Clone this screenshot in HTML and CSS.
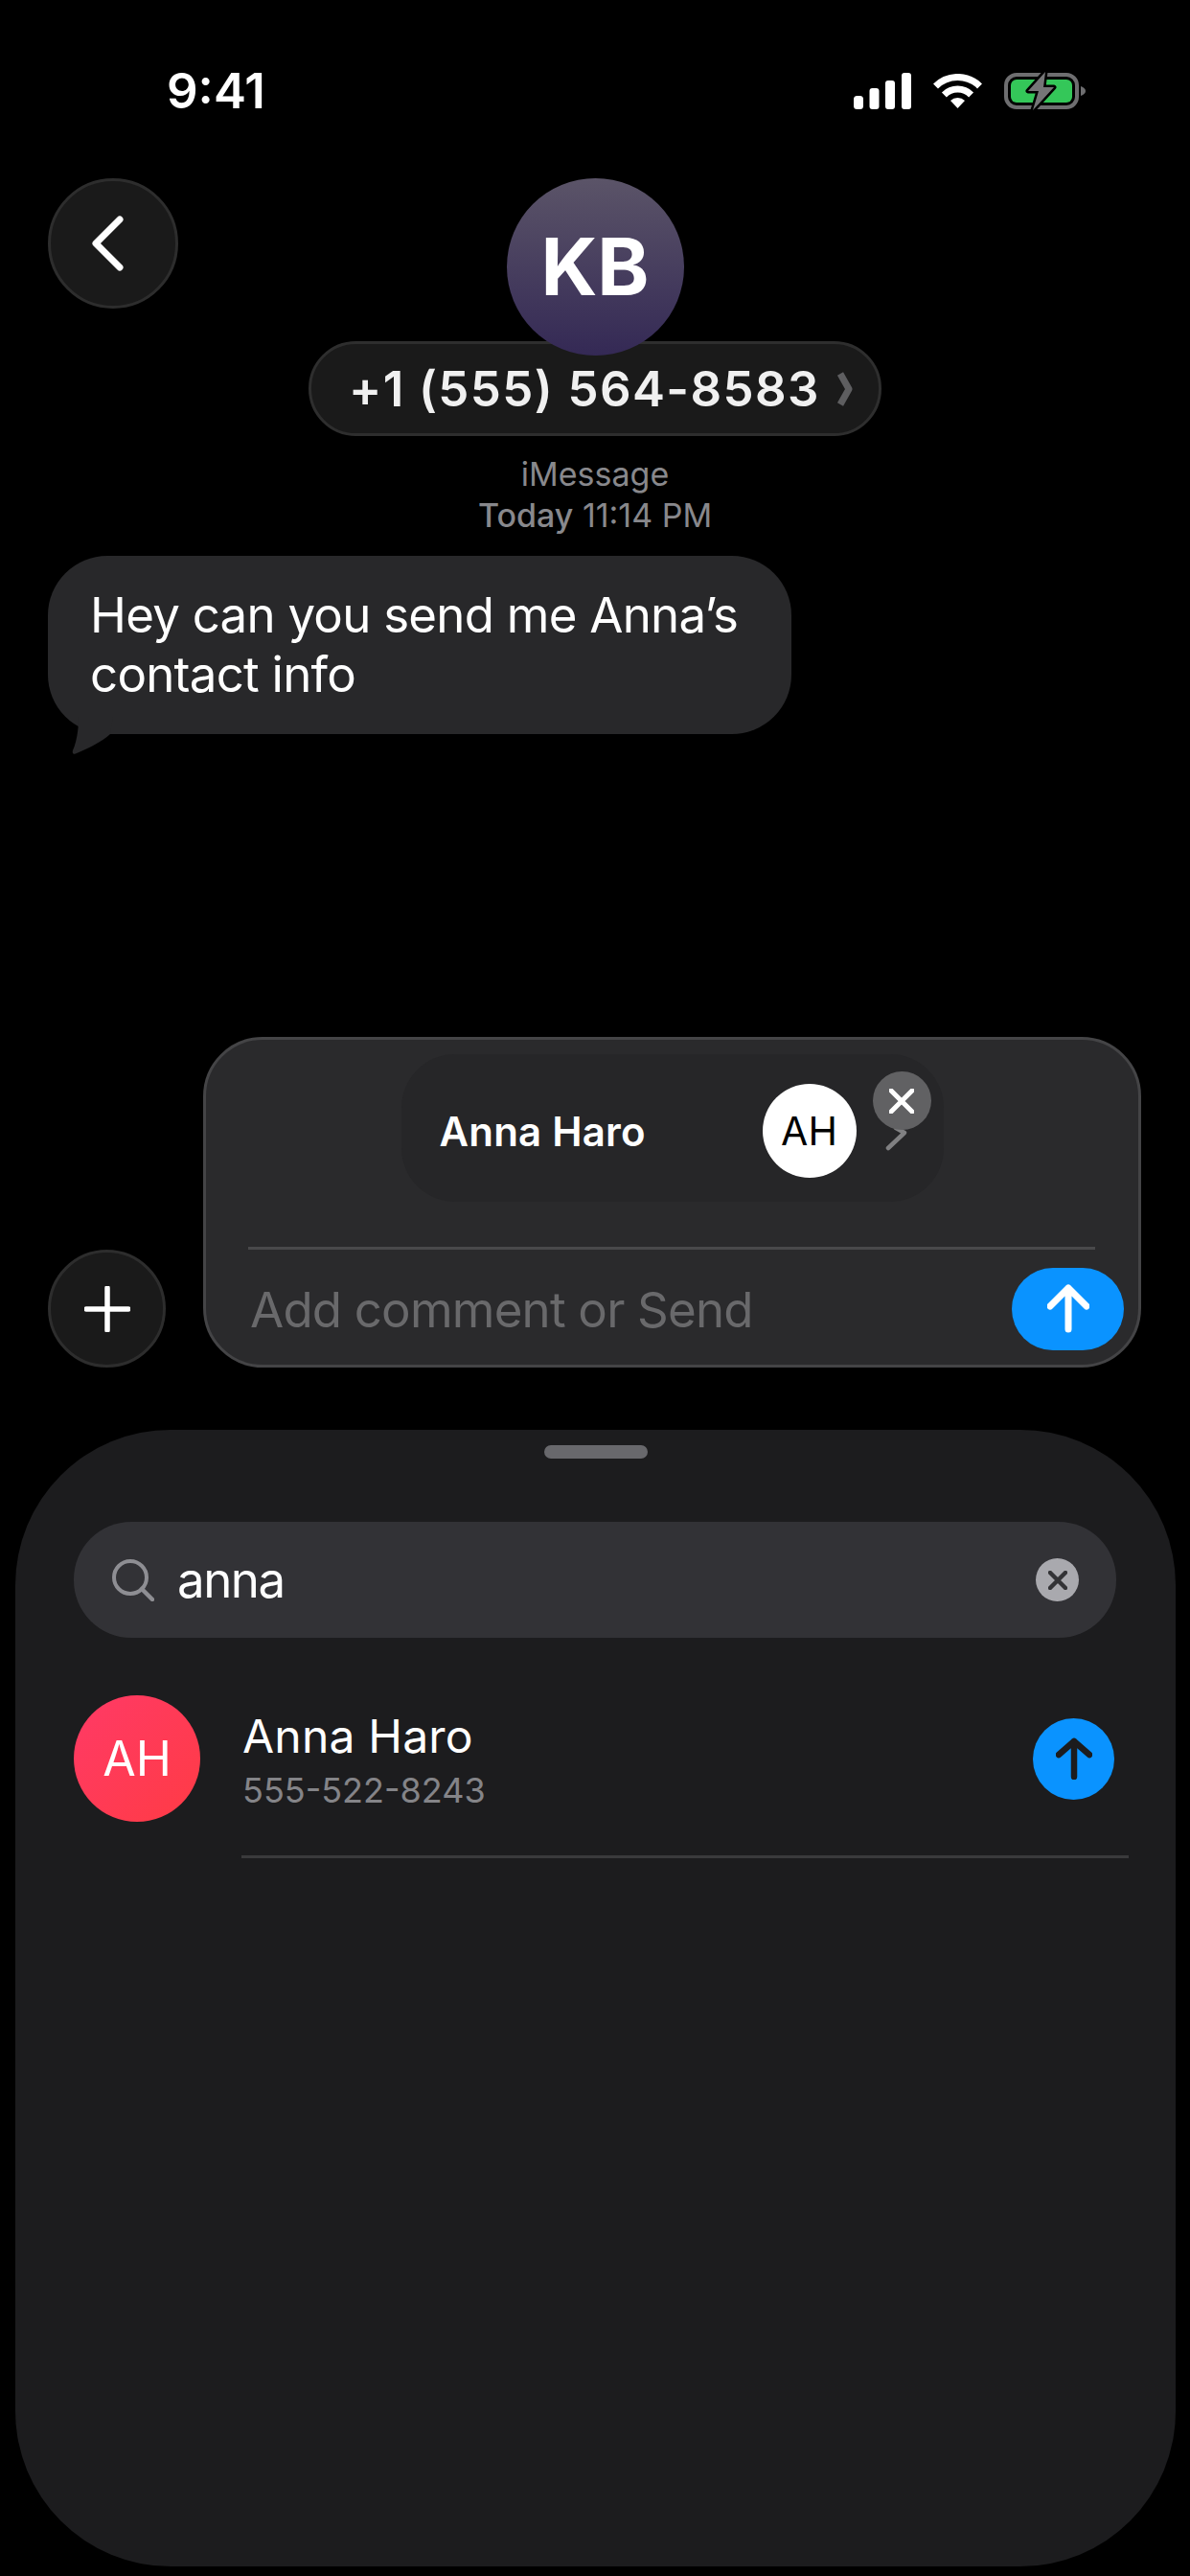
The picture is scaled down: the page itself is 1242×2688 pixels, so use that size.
FILE: index.html
```html
<!DOCTYPE html>
<html>
 <head>
  <meta charset="UTF-8">
  <title>Messages</title>
  <link rel="stylesheet" href="styles.css">
 </head>
 <body>
  <div class="screen">

   <div class="status">
    <div class="time">9:41</div>
    <div class="status-icons">
     <svg width="60" height="38" viewBox="0 0 60 38">
      <rect x="0" y="24" width="10" height="14" rx="3.5" fill="#fff"/>
      <rect x="16.5" y="16" width="10" height="22" rx="3" fill="#fff"/>
      <rect x="33" y="8" width="10" height="30" rx="3" fill="#fff"/>
      <rect x="50" y="0" width="10" height="38" rx="3" fill="#fff"/>
     </svg>
     <svg width="53" height="36" viewBox="0 0 53 36">
      <path d="M3.5 13 A32.5 32.5 0 0 1 49.5 13" fill="none" stroke="#fff" stroke-width="7"/>
      <path d="M12.4 21.9 A20 20 0 0 1 40.6 21.9" fill="none" stroke="#fff" stroke-width="7"/>
      <path d="M26.5 36 L19 28 A11 11 0 0 1 34 28 Z" fill="#fff"/>
     </svg>
     <svg class="battery" width="86" height="44" viewBox="0 0 86 44">
      <rect x="2" y="5" width="74" height="34" rx="11" fill="none" stroke="#6e6e70" stroke-width="4"/>
      <rect x="7" y="10" width="64" height="24" rx="6" fill="#34c759"/>
      <path d="M80 17 Q85 19 85 22 Q85 25 80 27 Z" fill="#6e6e70"/>
      <path d="M43 2 L25 22 L36 22 L30 42 L52 18 L41 18 Z" fill="#757577" stroke="#000" stroke-width="5" stroke-linejoin="round" paint-order="stroke"/>
     </svg>
    </div>
   </div>

   <div class="head">
    <div class="round-btn back">
     <svg class="back-icon" width="48" height="64" viewBox="0 0 48 64">
      <path d="M36 7 L11 32 L36 57" fill="none" stroke="#fff" stroke-width="7" stroke-linecap="round" stroke-linejoin="round"/>
     </svg>
    </div>
    <div class="head-mid">
     <div class="avatar-big">KB</div>
     <div class="number-pill">
      <span>+1 (555) 564-8583</span>
      <svg width="17" height="38" viewBox="0 0 17 38">
       <path d="M4 3 L13 19 L4 35" fill="none" stroke="#5e5e60" stroke-width="7" stroke-linejoin="round"/>
      </svg>
     </div>
     <div class="meta">iMessage</div>
     <div class="meta"><b>Today</b> 11:14 PM</div>
    </div>
   </div>

   <div class="bubble">
    Hey can you send me Anna’s<br>contact info
    <svg class="tail" width="44" height="40" viewBox="0 0 44 40">
     <path d="M8 0 C8 14 6 26 2 35 C1 38 3 40 6 38 C20 32 32 26 41 18 L44 0 Z" fill="#28282a"/>
    </svg>
   </div>

   <div class="composer">
    <div class="round-btn plus">
     <svg width="48" height="48" viewBox="0 0 48 48">
      <path d="M24 2 V46 M2 24 H46" fill="none" stroke="#fff" stroke-width="5.5" stroke-linecap="round"/>
     </svg>
    </div>
    <div class="compose-card">
     <div class="contact-chip">
      <span class="chip-name">Anna Haro</span>
      <div class="chip-avatar">AH</div>
      <svg class="chip-arrow" width="24" height="26" viewBox="0 0 24 26">
       <path d="M11 2 L20 7 L3 23" fill="none" stroke="#808082" stroke-width="4.5" stroke-linecap="round" stroke-linejoin="round"/>
      </svg>
      <div class="chip-close">
       <svg width="26" height="26" viewBox="0 0 26 26">
        <path d="M2 2 L24 24 M24 2 L2 24" fill="none" stroke="#fff" stroke-width="5" stroke-linecap="round"/>
       </svg>
      </div>
     </div>
     <div class="card-line"></div>
     <div class="input-row">
      <span class="placeholder">Add comment or Send</span>
      <div class="send-btn">
       <svg width="44" height="52" viewBox="0 0 44 52">
        <path d="M22 4 V47 M3 23 L22 4 L41 23" fill="none" stroke="#fff" stroke-width="7" stroke-linecap="round" stroke-linejoin="round"/>
       </svg>
      </div>
     </div>
    </div>
   </div>

   <div class="sheet">
    <div class="grabber"></div>
    <div class="search">
     <svg width="44" height="44" viewBox="0 0 44 44">
      <circle cx="19" cy="19" r="17" fill="none" stroke="#8e8e93" stroke-width="4"/>
      <path d="M31 31 L42 42" fill="none" stroke="#8e8e93" stroke-width="4.5" stroke-linecap="round"/>
     </svg>
     <span class="search-text">anna</span>
     <div class="search-clear">
      <svg width="20" height="20" viewBox="0 0 20 20">
       <path d="M2 2 L18 18 M18 2 L2 18" fill="none" stroke="#333336" stroke-width="4.5" stroke-linecap="round"/>
      </svg>
     </div>
    </div>
    <div class="result">
     <div class="result-avatar">AH</div>
     <div class="result-text">
      <div class="result-name">Anna Haro</div>
      <div class="result-phone">555-522-8243</div>
     </div>
     <div class="result-send">
      <svg width="38" height="44" viewBox="0 0 38 44">
       <path d="M19 4 V41 M3 18 L19 4 L35 18" fill="none" stroke="#1c1c1e" stroke-width="6.5" stroke-linecap="round" stroke-linejoin="round"/>
      </svg>
     </div>
    </div>
    <div class="result-line"></div>
   </div>

  </div>
 </body>
</html>
```

FILE: styles.css
```css
*{ margin:0; padding:0; box-sizing:border-box; }

body{
 background:#000;
 color:#fff;
 font-family:Inter,"Liberation Sans",sans-serif;
}

.screen{
 width:1242px;
 height:2688px;
 overflow:hidden;
 display:flex;
 flex-direction:column;
}

/* status bar */
.status{
 height:186px;
 padding:65px 108px 0 174px;
 display:flex;
 justify-content:space-between;
 align-items:flex-start;
}
.time{
 font-size:51px;
 line-height:60px;
 font-weight:600;
}
.status-icons{
 display:flex;
 align-items:center;
 gap:22px;
 margin-top:11px;
}
.battery{ margin:-3px 0; }

/* header */
.head{
 display:grid;
 grid-template-columns:1fr auto 1fr;
 padding-left:50px;
}
.round-btn{
 background:#1a1a1a;
 border:3px solid #2d2d2d;
 border-radius:50%;
 display:flex;
 align-items:center;
 justify-content:center;
}
.back{
 width:136px;
 height:136px;
}
.back-icon{ margin-right:10px; }
.head-mid{
 display:flex;
 flex-direction:column;
 align-items:center;
 margin-left:-50px;
}
.avatar-big{
 width:185px;
 height:185px;
 border-radius:50%;
 background:linear-gradient(#5b5468,#342955);
 font-size:82px;
 font-weight:700;
 line-height:185px;
 text-align:center;
 position:relative;
 z-index:1;
}
.number-pill{
 width:598px;
 height:99px;
 margin-top:-15px;
 padding-left:39px;
 background:#1a1a1a;
 border:3px solid #2e2e2e;
 border-radius:50px;
 display:flex;
 align-items:center;
 gap:17px;
 font-size:51px;
 font-weight:600;
 letter-spacing:1.4px;
 color:#f0f0f0;
 white-space:nowrap;
}
.meta{
 font-size:34px;
 line-height:43px;
 color:#88888c;
 white-space:nowrap;
}
.number-pill + .meta{ margin-top:18px; }
.meta b{ font-weight:500; }

/* received message */
.bubble{
 width:776px;
 margin:21px 0 0 50px;
 padding:31px 44px;
 background:#28282a;
 border-radius:62px;
 font-size:51px;
 letter-spacing:-.75px;
 line-height:62px;
 white-space:nowrap;
 position:relative;
}
.tail{
 position:absolute;
 left:24px;
 top:168px;
}

/* attachment + input */
.composer{
 margin:316px 51px 0 50px;
 display:flex;
 align-items:flex-end;
 gap:39px;
}
.plus{
 width:123px;
 height:123px;
 flex:none;
}
.compose-card{
 flex:1;
 height:345px;
 padding-top:15px;
 background:#2a2a2c;
 border:3px solid #444446;
 border-radius:62px;
}
.contact-chip{
 width:566px;
 height:154px;
 margin:0 auto;
 padding:6px 40px 0;
 background:#262628;
 border-radius:56px;
 display:flex;
 align-items:center;
 position:relative;
}
.chip-name{
 font-size:42px;
 font-weight:600;
 letter-spacing:.2px;
 white-space:nowrap;
}
.chip-avatar{
 width:98px;
 height:98px;
 margin-left:auto;
 margin-right:51px;
 flex:none;
 background:#fff;
 color:#000;
 border-radius:50%;
 font-size:41px;
 line-height:98px;
 text-align:center;
}
.chip-arrow{
 position:absolute;
 left:505px;
 top:75px;
}
.chip-close{
 position:absolute;
 left:492px;
 top:18px;
 width:61px;
 height:61px;
 background:#616163;
 border-radius:50%;
 display:flex;
 align-items:center;
 justify-content:center;
}
.card-line{
 height:3px;
 margin:47px 45px 0 44px;
 background:#49494b;
}
.input-row{
 padding:19px 15px 0 46px;
 display:flex;
 justify-content:space-between;
 align-items:center;
}
.placeholder{
 font-size:51px;
 letter-spacing:-.8px;
 color:#69696b;
 white-space:nowrap;
}
.send-btn{
 width:117px;
 height:86px;
 background:#0a93ff;
 border-radius:43px;
 display:flex;
 align-items:center;
 justify-content:center;
}

/* bottom sheet */
.sheet{
 flex:none;
 height:1186px;
 margin:65px 15px 0 16px;
 padding-top:16px;
 background:#1c1c1e;
 border-radius:162px;
}
.grabber{
 width:108px;
 height:14px;
 margin:0 auto;
 background:#68686c;
 border-radius:7px;
}
.search{
 height:121px;
 margin:66px 62px 0 61px;
 padding:0 39px 0 40px;
 background:#323236;
 border-radius:60px;
 display:flex;
 align-items:center;
}
.search-text{
 margin-left:24px;
 font-size:51px;
 letter-spacing:-1.5px;
}
.search-clear{
 width:45px;
 height:45px;
 margin-left:auto;
 background:#a9a9ae;
 border-radius:50%;
 display:flex;
 align-items:center;
 justify-content:center;
}
.result{
 margin:60px 49px 0 61px;
 display:flex;
 align-items:center;
}
.result-avatar{
 width:132px;
 height:132px;
 flex:none;
 border-radius:50%;
 background:linear-gradient(135deg,#ff3a66,#ff3b45);
 font-size:50px;
 line-height:132px;
 text-align:center;
}
.result-text{
 margin:10px 0 0 44px;
}
.result-name{
 font-size:48px;
 letter-spacing:.2px;
 line-height:56px;
}
.result-phone{
 font-size:36px;
 line-height:56px;
 color:#848488;
}
.result-send{
 width:85px;
 height:85px;
 margin-left:auto;
 margin-right:15px;
 background:#0a93ff;
 border-radius:50%;
 display:flex;
 align-items:center;
 justify-content:center;
}
.result-line{
 height:3px;
 margin:35px 49px 0 236px;
 background:#3a3a3c;
}
```
